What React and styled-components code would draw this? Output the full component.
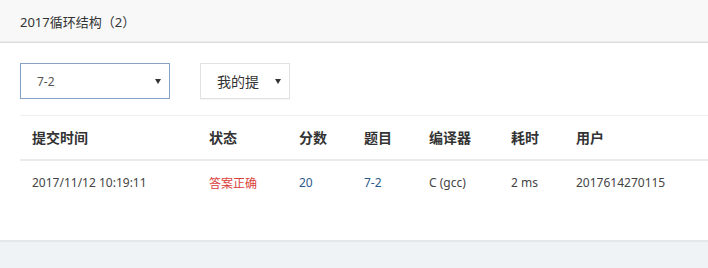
import styled, { createGlobalStyle } from "styled-components"
import React from 'react';

const GlobalStyle = createGlobalStyle`
  html, body {
    margin: 0;
    padding: 0;
    background: #eff3f6;
    font-family: "Noto Sans", "Noto Sans CJK SC", sans-serif;
  }
`;

const Page = styled.div`
  width: 100%;
`;

const TitleBar = styled.header`
  height: 42px;
  background: #f8f8f8;
  border-bottom: 1px solid #dcdcdc;
  box-shadow: 0 -1px 0 #ececec inset;
  display: flex;
  align-items: center;
  padding-left: 20px;
  font-size: 13px;
  color: #333;
`;

const Panel = styled.section`
  background: #fff;
  padding: 20px 0 0 20px;
  height: 177px;
  border-bottom: 2px solid #e4e8eb;
  overflow: hidden;
`;

const Filters = styled.div`
  display: flex;
  gap: 30px;
  margin-bottom: 16px;
`;

const Select = styled.div`
  box-sizing: border-box;
  width: ${p => p.$width}px;
  height: 36px;
  display: flex;
  align-items: center;
  justify-content: space-between;
  padding: 0 8px 0 16px;
  border: 1px solid ${p => (p.$active ? '#86a3c3' : '#e2e2e2')};
  box-shadow: ${p => (p.$active ? 'none' : '0 1px 1px rgba(0,0,0,0.04)')};
  background: #fff;
  color: ${p => (p.$active ? '#555' : '#333')};
  font-size: ${p => p.$size}px;
`;

const Caret = styled.span`
  width: 0;
  height: 0;
  border-left: 3px solid transparent;
  border-right: 3px solid transparent;
  border-top: 5px solid #333;
`;

const Table = styled.table`
  width: 100%;
  border-collapse: collapse;
  table-layout: fixed;
  border-top: 1px solid #efefef;
`;

const Th = styled.th`
  box-sizing: border-box;
  width: ${p => (p.$w ? `${p.$w}px` : 'auto')};
  height: 44px;
  padding: 0 0 0 12px;
  text-align: left;
  font-size: 14px;
  font-weight: 700;
  color: #333;
  border-bottom: 2px solid #ebebeb;
`;

const Td = styled.td`
  height: 44px;
  padding: 0 0 0 12px;
  font-size: 12px;
  color: ${p => p.$color || '#444'};
  white-space: nowrap;
`;

const columns = [
  { label: '提交时间', w: 177 },
  { label: '状态', w: 90 },
  { label: '分数', w: 65 },
  { label: '题目', w: 65 },
  { label: '编译器', w: 82 },
  { label: '耗时', w: 65 },
  { label: '用户' },
];

const rows = [
  { time: '2017/11/12 10:19:11', status: '答案正确', score: '20', problem: '7-2', compiler: 'C (gcc)', cost: '2 ms', user: '2017614270115' },
];

const App = () => {
  return (
    <Page>
      <GlobalStyle />
      <TitleBar>2017循环结构（2）</TitleBar>
      <Panel>
        <Filters>
          <Select $width={150} $size={12} $active>
            <span>7-2</span>
            <Caret />
          </Select>
          <Select $width={90} $size={14}>
            <span>我的提</span>
            <Caret />
          </Select>
        </Filters>
        <Table>
          <thead>
            <tr>
              {columns.map(c => (
                <Th key={c.label} $w={c.w}>{c.label}</Th>
              ))}
            </tr>
          </thead>
          <tbody>
            {rows.map(r => (
              <tr key={r.time}>
                <Td>{r.time}</Td>
                <Td $color="#d9403a">{r.status}</Td>
                <Td $color="#2b5a8c">{r.score}</Td>
                <Td $color="#2b5a8c">{r.problem}</Td>
                <Td>{r.compiler}</Td>
                <Td>{r.cost}</Td>
                <Td>{r.user}</Td>
              </tr>
            ))}
          </tbody>
        </Table>
      </Panel>
    </Page>
  )
}

export default App;
